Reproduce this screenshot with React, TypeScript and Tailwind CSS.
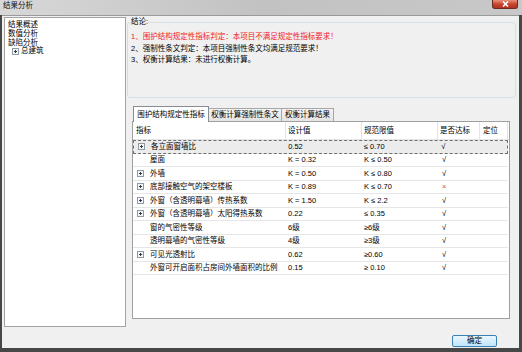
import React from 'react';

type Row = {
  name: string;
  design: string;
  limit: string;
  ok: boolean;
  expandable: boolean;
  selected?: boolean;
};

const rows: Row[] = [
  { name: '各立面窗墙比', design: '0.52', limit: '≤ 0.70', ok: true, expandable: true, selected: true },
  { name: '屋面', design: 'K = 0.32', limit: 'K ≤ 0.50', ok: true, expandable: false },
  { name: '外墙', design: 'K = 0.50', limit: 'K ≤ 0.80', ok: true, expandable: true },
  { name: '底部接触空气的架空楼板', design: 'K = 0.89', limit: 'K ≤ 0.70', ok: false, expandable: true },
  { name: '外窗（含透明幕墙）传热系数', design: 'K = 1.50', limit: 'K ≤ 2.2', ok: true, expandable: true },
  { name: '外窗（含透明幕墙）太阳得热系数', design: '0.22', limit: '≤ 0.35', ok: true, expandable: true },
  { name: '窗的气密性等级', design: '6级', limit: '≥6级', ok: true, expandable: false },
  { name: '透明幕墙的气密性等级', design: '4级', limit: '≥3级', ok: true, expandable: false },
  { name: '可见光透射比', design: '0.62', limit: '≥0.60', ok: true, expandable: true },
  { name: '外窗可开启面积占房间外墙面积的比例', design: '0.15', limit: '≥ 0.10', ok: true, expandable: false },
];

const PlusBox = () => (
  <svg width="7" height="7" viewBox="0 0 7 7" className="shrink-0">
    <rect x="0.5" y="0.5" width="6" height="6" fill="#f4f6f8" stroke="#8f9aa6" />
    <path d="M2 3.5h3M3.5 2v3" stroke="#2d3b4a" strokeWidth="1" />
  </svg>
);

export default function App() {
  return (
    <div className="flex h-[352px] w-[522px] flex-col overflow-hidden bg-[#474747] font-['Liberation_Sans','Noto_Sans_CJK_SC',sans-serif] text-[7.5px] text-black">
      {/* 标题栏 */}
      <div className="flex h-[15px] items-start justify-between bg-gradient-to-r from-[#d8d8d8] via-[#c2c2c2] to-[#c8c8c8] pl-[3px]">
        <span className="pt-[1px] leading-[9px] text-[#111]">结果分析</span>
        <div className="mr-[4px] flex h-[9px] w-[26px] items-center justify-center rounded-b-[3px] border border-t-0 border-[#6b2a22] bg-gradient-to-b from-[#e8907c] via-[#c9452d] to-[#b13320]">
          <svg width="7" height="6" viewBox="0 0 7 6">
            <path d="M1 0.5l5 5M6 0.5l-5 5" stroke="#fff" strokeWidth="1.6" />
          </svg>
        </div>
      </div>

      <div className="mb-[4px] ml-[2px] mr-[3px] flex flex-1 flex-col border-t border-[#9a9a9a] bg-[#f0f0f0]">
        <div className="flex h-[311px] pl-[2px] pt-[1px]">
          {/* 左侧树 */}
          <div className="h-[310px] w-[122px] border border-[#a3a3a3] bg-white pl-[3px] pt-[3px] leading-[8.8px]">
            <div>结果概述</div>
            <div>数值分析</div>
            <div>缺陷分析</div>
            <div className="flex items-center gap-[2px] pl-[4px]">
              <PlusBox />
              <span>总建筑</span>
            </div>
          </div>

          {/* 右侧 */}
          <div className="ml-[1px] flex w-[389px] flex-col">
            <fieldset className="mt-[1px] h-[80px] rounded-[3px] border border-[#d5dfe5] px-[3px]">
              <legend className="ml-0 leading-[8px]">结论:</legend>
              <div className="pt-[5px] leading-[11.5px]">
                <div className="text-[#f01c1c]">1、围护结构规定性指标判定：本项目不满足规定性指标要求！</div>
                <div>2、强制性条文判定：本项目强制性条文均满足规范要求！</div>
                <div>3、权衡计算结果：未进行权衡计算。</div>
              </div>
            </fieldset>

            {/* 选项卡 */}
            <div className="ml-[5px] mt-[8px] flex w-[378px] flex-col">
              <div className="flex h-[15px] items-end pl-[1px]">
                <div className="relative z-10 -mb-px flex h-[16px] w-[76px] items-center justify-center border border-b-0 border-[#898c95] bg-white">
                  围护结构规定性指标
                </div>
                <div className="flex h-[13px] w-[73px] items-center justify-center border border-l-0 border-b-0 border-[#a7a7a7] bg-gradient-to-b from-[#f3f3f3] to-[#e4e4e4]">
                  权衡计算强制性条文
                </div>
                <div className="flex h-[13px] w-[52px] items-center justify-center border border-l-0 border-b-0 border-[#a7a7a7] bg-gradient-to-b from-[#f3f3f3] to-[#e4e4e4]">
                  权衡计算结果
                </div>
              </div>

              <div className="h-[198px] border border-[#a0a0a0] bg-white">
                {/* 表头 */}
                <div className="flex h-[18px] items-center border-b border-[#e5e5e5]">
                  <div className="flex h-full w-[153px] items-center border-r border-[#e3e3e3] pl-[3px]">指标</div>
                  <div className="flex h-full w-[76px] items-center border-r border-[#e3e3e3] pl-[2px]">设计值</div>
                  <div className="flex h-full w-[76px] items-center border-r border-[#e3e3e3] pl-[2px]">规范限值</div>
                  <div className="flex h-full w-[42px] items-center border-r border-[#e3e3e3] pl-[2px]">是否达标</div>
                  <div className="flex h-full w-[28px] items-center border-r border-[#e3e3e3] pl-[3px]">定位</div>
                </div>

                {rows.map((row) => (
                  <div
                    key={row.name}
                    className={
                      row.selected
                        ? 'flex h-[13.5px] w-[375px] items-center border border-dashed border-[#6f6f6f] bg-[#ececec]'
                        : 'flex h-[13.5px] w-[375px] items-center border-b border-[#e6e6e6]'
                    }
                  >
                    <div className="flex w-[153px] items-center pl-[4px]">
                      <span className="flex w-[12px]">{row.expandable && <PlusBox />}</span>
                      <span className="pl-[1px]">{row.name}</span>
                    </div>
                    <div className="w-[76px] pl-[2px]">{row.design}</div>
                    <div className="w-[76px] pl-[2px]">{row.limit}</div>
                    <div className={row.ok ? 'w-[42px] pl-[4px]' : 'w-[42px] pl-[4px] text-[#e63b3b]'}>
                      {row.ok ? '√' : '×'}
                    </div>
                    <div className="w-[28px]" />
                  </div>
                ))}
              </div>
            </div>
          </div>
        </div>

        {/* 底部按钮 */}
        <div className="flex justify-end pr-[22px] pt-[8px]">
          <button className="flex h-[12px] w-[45px] items-center justify-center rounded-[2px] border border-[#3c7fb1] bg-gradient-to-b from-[#eaf6fd] to-[#bee6fd] leading-none">
            确定
          </button>
        </div>
      </div>
    </div>
  );
}
